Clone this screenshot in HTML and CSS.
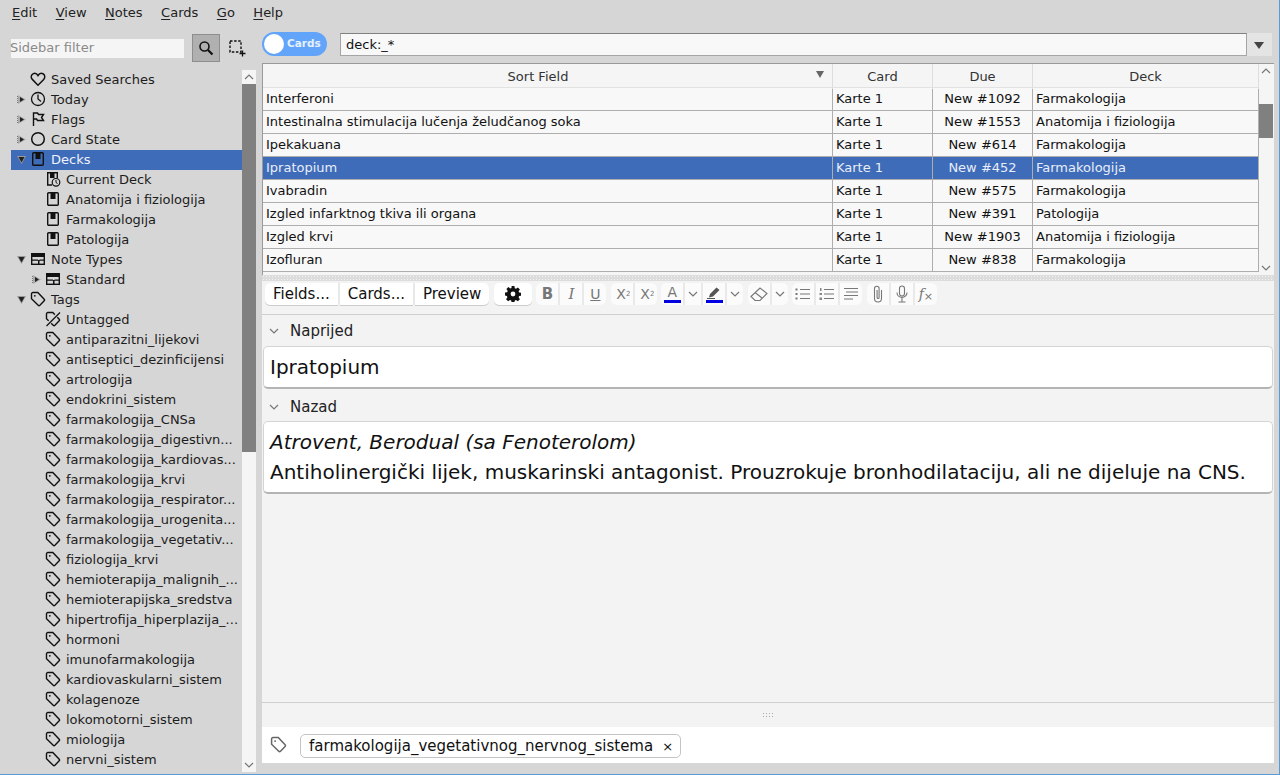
FILE: index.html
```html
<!DOCTYPE html>
<html lang="en">
<head>
    <meta charset="UTF-8">
    <meta name="viewport" content="width=device-width, initial-scale=1.0">
    <title>Browse</title>
    <link rel="stylesheet" href="styles.css">
</head>
<body>
    <svg class="sprite" width="0" height="0">
        <symbol id="open" viewBox="0 0 9 9"><path d="M0 1h9L4.500 9z" fill="#999"/><path d="M1.500 2h6L4.500 7.500z" fill="#222"/></symbol>
        <symbol id="closed" viewBox="0 0 9 9"><path d="M1 0l8 4.500L1 9z" fill="#aaa"/><path d="M3 2l4 2.500L3 7z" fill="#222"/><path d="M0 1h1v1H0zM0 3h1v1H0zM0 5h1v1H0zM0 7h1v1H0z" fill="#777"/></symbol>
        <symbol id="heart" viewBox="0 0 16 16"><path d="M8 14.200L2.300 8.400C.6 6.600 1 3.800 3 2.800c1.900-.9 3.800-.2 5 1.700 1.200-1.900 3.100-2.600 5-1.700 2 1 2.400 3.800.7 5.600z" fill="none" stroke="#111" stroke-width="1.500"/></symbol>
        <symbol id="clock" viewBox="0 0 16 16"><circle cx="8" cy="8" r="6.500" fill="none" stroke="#111" stroke-width="1.300"/><path d="M8 3.500V8l3 2.500" fill="none" stroke="#111" stroke-width="1.300"/></symbol>
        <symbol id="flag" viewBox="0 0 16 16"><path d="M3.500 15V2h4l1 1.500h5l-2 3 2 3h-6l-1-1.500H3.500" fill="none" stroke="#111" stroke-width="1.400"/></symbol>
        <symbol id="circle" viewBox="0 0 16 16"><circle cx="8" cy="8" r="6.300" fill="none" stroke="#111" stroke-width="1.500"/></symbol>
        <symbol id="deck" viewBox="0 0 16 16"><rect x="2.700" y="1.700" width="10.600" height="12.600" rx="1" fill="none" stroke="#111" stroke-width="1.400"/><path d="M5.500 2h5v6h-5z" fill="#111"/></symbol>
        <symbol id="current" viewBox="0 0 16 16"><path d="M7 14H2.700V1.700h9.600V7" fill="none" stroke="#111" stroke-width="1.400"/><path d="M5 2h4.500v5H5z" fill="#111"/><circle cx="11" cy="11.300" r="3.800" fill="#d6d6d6" stroke="#111" stroke-width="1.200"/><path d="M11 9v2.500l1.500 1" fill="none" stroke="#111"/></symbol>
        <symbol id="notetype" viewBox="0 0 16 16"><rect x="1.700" y="2.700" width="12.600" height="10.600" fill="none" stroke="#111" stroke-width="1.400"/><path d="M2 3h12v3H2zM2 8.500h6v1.300H2zM9.500 8.500H14v1.300H9.500zM8 9v4h1.500V9z" fill="#111"/></symbol>
        <symbol id="tag" viewBox="0 0 16 16"><path d="M1.500 2.800c0-.7.600-1.300 1.300-1.300h5l6.400 6.700c.4.500.4 1.200 0 1.600l-4.300 4.500c-.5.500-1.200.5-1.700 0L1.500 7.800z" fill="none" stroke="currentColor" stroke-width="1.400"/><circle cx="4.800" cy="4.800" r=".9" fill="currentColor"/></symbol>
        <symbol id="untagged" viewBox="0 0 16 16"><path d="M1.500 2.800c0-.7.600-1.300 1.300-1.300h5l6.400 6.700c.4.500.4 1.200 0 1.600l-4.300 4.500c-.5.500-1.200.5-1.700 0L1.500 7.800z" fill="none" stroke="#111" stroke-width="1.400"/><path d="M15 1L1 15" stroke="#d6d6d6" stroke-width="3.500"/><path d="M15 1.500L1.500 15" stroke="#111" stroke-width="1.300"/></symbol>
        <symbol id="caret" viewBox="0 0 10 6"><path d="M1 1l4 4 4-4" fill="none" stroke="#777" stroke-width="1.200"/></symbol>
    </svg>

    <div class="menubar">
        <span><u>E</u>dit</span>
        <span><u>V</u>iew</span>
        <span><u>N</u>otes</span>
        <span><u>C</u>ards</span>
        <span><u>G</u>o</span>
        <span><u>H</u>elp</span>
    </div>

    <div class="main">
        <div class="sidebar">
            <div class="filter-row">
                <div class="filter-input">Sidebar filter</div>
                <button class="search-btn">
                    <svg width="16" height="16" viewBox="0 0 16 16"><circle cx="6.500" cy="6.500" r="4.500" fill="none" stroke="#111" stroke-width="1.600"/><path d="M10 10l4.500 4.500" stroke="#111" stroke-width="2.200"/></svg>
                </button>
                <svg class="select-ico" width="17" height="17" viewBox="0 0 17 17"><path d="M1 1h11v11H1z" fill="none" stroke="#111" stroke-width="1.400" stroke-dasharray="2.500 1.600"/><path d="M13.500 10.500v6M10.500 13.500h6" stroke="#111" stroke-width="1.300"/></svg>
            </div>
            <div class="tree-wrap">
                <div class="tree">
                    <div class="row"><span class="arrow"></span><svg class="ico"><use href="#heart"/></svg>Saved Searches</div>
                    <div class="row"><span class="arrow"><svg><use href="#closed"/></svg></span><svg class="ico"><use href="#clock"/></svg>Today</div>
                    <div class="row"><span class="arrow"><svg><use href="#closed"/></svg></span><svg class="ico"><use href="#flag"/></svg>Flags</div>
                    <div class="row"><span class="arrow"><svg><use href="#closed"/></svg></span><svg class="ico"><use href="#circle"/></svg>Card State</div>
                    <div class="row selected"><span class="arrow"><svg><use href="#open"/></svg></span><svg class="ico"><use href="#deck"/></svg>Decks</div>
                    <div class="row child"><span class="arrow"></span><svg class="ico"><use href="#current"/></svg>Current Deck</div>
                    <div class="row child"><span class="arrow"></span><svg class="ico"><use href="#deck"/></svg>Anatomija i fiziologija</div>
                    <div class="row child"><span class="arrow"></span><svg class="ico"><use href="#deck"/></svg>Farmakologija</div>
                    <div class="row child"><span class="arrow"></span><svg class="ico"><use href="#deck"/></svg>Patologija</div>
                    <div class="row"><span class="arrow"><svg><use href="#open"/></svg></span><svg class="ico"><use href="#notetype"/></svg>Note Types</div>
                    <div class="row child"><span class="arrow"><svg><use href="#closed"/></svg></span><svg class="ico"><use href="#notetype"/></svg>Standard</div>
                    <div class="row"><span class="arrow"><svg><use href="#open"/></svg></span><svg class="ico"><use href="#tag"/></svg>Tags</div>
                    <div class="row child"><span class="arrow"></span><svg class="ico"><use href="#untagged"/></svg>Untagged</div>
                    <div class="row child"><span class="arrow"></span><svg class="ico"><use href="#tag"/></svg>antiparazitni_lijekovi</div>
                    <div class="row child"><span class="arrow"></span><svg class="ico"><use href="#tag"/></svg>antiseptici_dezinficijensi</div>
                    <div class="row child"><span class="arrow"></span><svg class="ico"><use href="#tag"/></svg>artrologija</div>
                    <div class="row child"><span class="arrow"></span><svg class="ico"><use href="#tag"/></svg>endokrini_sistem</div>
                    <div class="row child"><span class="arrow"></span><svg class="ico"><use href="#tag"/></svg>farmakologija_CNSa</div>
                    <div class="row child"><span class="arrow"></span><svg class="ico"><use href="#tag"/></svg>farmakologija_digestivn...</div>
                    <div class="row child"><span class="arrow"></span><svg class="ico"><use href="#tag"/></svg>farmakologija_kardiovas...</div>
                    <div class="row child"><span class="arrow"></span><svg class="ico"><use href="#tag"/></svg>farmakologija_krvi</div>
                    <div class="row child"><span class="arrow"></span><svg class="ico"><use href="#tag"/></svg>farmakologija_respirator...</div>
                    <div class="row child"><span class="arrow"></span><svg class="ico"><use href="#tag"/></svg>farmakologija_urogenita...</div>
                    <div class="row child"><span class="arrow"></span><svg class="ico"><use href="#tag"/></svg>farmakologija_vegetativ...</div>
                    <div class="row child"><span class="arrow"></span><svg class="ico"><use href="#tag"/></svg>fiziologija_krvi</div>
                    <div class="row child"><span class="arrow"></span><svg class="ico"><use href="#tag"/></svg>hemioterapija_malignih_...</div>
                    <div class="row child"><span class="arrow"></span><svg class="ico"><use href="#tag"/></svg>hemioterapijska_sredstva</div>
                    <div class="row child"><span class="arrow"></span><svg class="ico"><use href="#tag"/></svg>hipertrofija_hiperplazija_...</div>
                    <div class="row child"><span class="arrow"></span><svg class="ico"><use href="#tag"/></svg>hormoni</div>
                    <div class="row child"><span class="arrow"></span><svg class="ico"><use href="#tag"/></svg>imunofarmakologija</div>
                    <div class="row child"><span class="arrow"></span><svg class="ico"><use href="#tag"/></svg>kardiovaskularni_sistem</div>
                    <div class="row child"><span class="arrow"></span><svg class="ico"><use href="#tag"/></svg>kolagenoze</div>
                    <div class="row child"><span class="arrow"></span><svg class="ico"><use href="#tag"/></svg>lokomotorni_sistem</div>
                    <div class="row child"><span class="arrow"></span><svg class="ico"><use href="#tag"/></svg>miologija</div>
                    <div class="row child"><span class="arrow"></span><svg class="ico"><use href="#tag"/></svg>nervni_sistem</div>
                </div>
                <div class="scrollbar side-scroll">
                    <svg class="sb-btn"><use href="#caret" transform="rotate(180 7 7)" x="2" y="4" width="10" height="6"/></svg>
                    <div class="track"><div class="thumb"></div></div>
                    <svg class="sb-btn"><use href="#caret" x="2" y="4" width="10" height="6"/></svg>
                </div>
            </div>
        </div>

        <div class="content">
            <div class="search-row">
                <div class="toggle"><span class="knob"></span><span class="toggle-label">Cards</span></div>
                <div class="search-box">
                    <div class="search-text">deck:_*</div>
                    <div class="search-drop"></div>
                </div>
            </div>

            <div class="table-wrap">
                <div class="table">
                    <div class="thead">
                        <div class="th sorted">Sort Field<span class="sort-mark"></span></div>
                        <div class="th">Card</div>
                        <div class="th">Due</div>
                        <div class="th">Deck</div>
                    </div>
                    <div class="tr"><div>Interferoni</div><div>Karte 1</div><div class="due">New #1092</div><div>Farmakologija</div></div>
                    <div class="tr"><div>Intestinalna stimulacija lučenja želudčanog soka</div><div>Karte 1</div><div class="due">New #1553</div><div>Anatomija i fiziologija</div></div>
                    <div class="tr"><div>Ipekakuana</div><div>Karte 1</div><div class="due">New #614</div><div>Farmakologija</div></div>
                    <div class="tr active"><div>Ipratopium</div><div>Karte 1</div><div class="due">New #452</div><div>Farmakologija</div></div>
                    <div class="tr"><div>Ivabradin</div><div>Karte 1</div><div class="due">New #575</div><div>Farmakologija</div></div>
                    <div class="tr"><div>Izgled infarktnog tkiva ili organa</div><div>Karte 1</div><div class="due">New #391</div><div>Patologija</div></div>
                    <div class="tr"><div>Izgled krvi</div><div>Karte 1</div><div class="due">New #1903</div><div>Anatomija i fiziologija</div></div>
                    <div class="tr"><div>Izofluran</div><div>Karte 1</div><div class="due">New #838</div><div>Farmakologija</div></div>
                </div>
                <div class="scrollbar table-scroll">
                    <svg class="sb-btn"><use href="#caret" transform="rotate(180 7 7)" x="2" y="4" width="10" height="6"/></svg>
                    <div class="track"><div class="thumb"></div></div>
                    <svg class="sb-btn"><use href="#caret" x="2" y="4" width="10" height="6"/></svg>
                </div>
            </div>

            <div class="splitter"></div>

            <div class="editor">
                <div class="toolbar">
                    <div class="btn-group">
                        <button class="text-btn">Fields...</button>
                        <button class="text-btn">Cards...</button>
                        <button class="text-btn">Preview</button>
                    </div>
                    <button class="gear-btn">
                        <svg width="16" height="16" viewBox="0 0 16 16"><path d="M6.600 0h2.800l.4 2.200 1.200.5 1.900-1.300 2 2-1.300 1.900.5 1.200 2.200.4v2.800l-2.200.4-.5 1.200 1.300 1.900-2 2-1.900-1.300-1.200.5-.4 2.200H6.600l-.4-2.200-1.200-.5-1.900 1.300-2-2 1.300-1.900-.5-1.200L0 9.400V6.600l2.200-.4.500-1.200L1.400 3.100l2-2 1.900 1.300 1.200-.5z" fill="#111"/><circle cx="8" cy="8" r="2.400" fill="#fff"/></svg>
                    </button>
                    <div class="icon-group">
                        <span class="tb bold">B</span><span class="tb ital">I</span><span class="tb under">U</span>
                    </div>
                    <div class="icon-group">
                        <span class="tb script">X<sup>2</sup></span><span class="tb script">X<sub>2</sub></span>
                    </div>
                    <div class="icon-group">
                        <span class="tb color"><i>A</i><b></b></span><span class="tb narrow"><svg width="10" height="6"><use href="#caret"/></svg></span><span class="tb color">
                            <svg width="16" height="13" viewBox="0 0 16 13"><path d="M3 11.500l1-3.500 6.500-6.500 3 2.500L7 10.500z" fill="#555"/><path d="M1 12.500h8" stroke="#555"/></svg><b></b>
                        </span><span class="tb narrow"><svg width="10" height="6"><use href="#caret"/></svg></span>
                    </div>
                    <div class="icon-group">
                        <span class="tb">
                            <svg width="18" height="18" viewBox="0 0 18 18"><path d="M1 11.500l9-8.500 7 5.500-7 7H5zM5 7.500l7 5.500" fill="none" stroke="#777" stroke-width="1.100"/></svg>
                        </span><span class="tb narrow"><svg width="10" height="6"><use href="#caret"/></svg></span>
                    </div>
                    <div class="icon-group">
                        <span class="tb">
                            <svg width="16" height="14" viewBox="0 0 16 14"><path d="M5 2.500h10M5 7h10M5 11.500h10" stroke="#777"/><path d="M.5 1.500h2v2h-2zM.5 6h2v2h-2zM.5 10.500h2v2h-2z" fill="#777"/></svg>
                        </span><span class="tb">
                            <svg width="16" height="14" viewBox="0 0 16 14"><path d="M5 2.500h10M5 7h10M5 11.500h10" stroke="#777"/><path d="M1 1h1.500v3H1zM.5 6H3v2H.5zM.5 10.500H3V13H.5z" fill="#888"/></svg>
                        </span><span class="tb">
                            <svg width="16" height="14" viewBox="0 0 16 14"><path d="M1 1.500h14M3 5h12M1 8.500h14M1 12h9" stroke="#777"/></svg>
                        </span>
                    </div>
                    <div class="icon-group">
                        <span class="tb">
                            <svg width="12" height="18" viewBox="0 0 12 18"><path d="M9.500 5v8.500a3.500 3.500 0 0 1-7 0V3.500a2.300 2.300 0 0 1 4.600 0v9a1 1 0 0 1-2 0V5" fill="none" stroke="#777" stroke-width="1.100"/></svg>
                        </span><span class="tb">
                            <svg width="14" height="18" viewBox="0 0 14 18"><rect x="4.500" y="1" width="5" height="10" rx="2.500" fill="none" stroke="#777" stroke-width="1.100"/><path d="M2 7.500c0 6.500 10 6.500 10 0M7 13v4M3.500 17h7" fill="none" stroke="#777" stroke-width="1.100"/></svg>
                        </span><span class="tb fx"><i>f</i><small>×</small></span>
                    </div>
                </div>

                <div class="fields">
                    <div class="field-label"><svg width="10" height="6"><use href="#caret"/></svg>Naprijed</div>
                    <div class="field-box">Ipratopium</div>
                    <div class="field-label"><svg width="10" height="6"><use href="#caret"/></svg>Nazad</div>
                    <div class="field-box"><em>Atrovent, Berodual (sa Fenoterolom)</em><br>Antiholinergički lijek, muskarinski antagonist. Prouzrokuje bronhodilataciju, ali ne dijeluje na CNS.</div>
                </div>

                <div class="grip-row"><span class="grip"></span></div>

                <div class="tag-bar">
                    <svg class="tag-ico" width="17" height="17"><use href="#tag"/></svg>
                    <div class="tag-pill">farmakologija_vegetativnog_nervnog_sistema<span class="tag-x">×</span></div>
                </div>
            </div>
        </div>
    </div>
    <div class="bottom-gap"></div>
</body>
</html>
```

FILE: styles.css
```css
* {
    box-sizing: border-box;
}

body {
    margin: 0;
    width: 1280px;
    height: 775px;
    overflow: hidden;
    background: #d6d6d6;
    color: #111;
    font-family: "DejaVu Sans", sans-serif;
    font-size: 13px;
    display: flex;
    flex-direction: column;
    border-right: 1px solid #5b9bd5;
    border-bottom: 1px solid #5b9bd5;
}

.sprite {
    position: absolute;
}

u {
    text-underline-offset: 2px;
}

/* menu */
.menubar {
    height: 24px;
    flex: none;
    display: flex;
    align-items: center;
    gap: 18.500px;
    padding-left: 12px;
    color: #222;
}

/* left side */
.main {
    flex: 1;
    display: flex;
    min-height: 0;
}

.sidebar {
    width: 262px;
    flex: none;
    padding-top: 10px;
}

.filter-row {
    display: flex;
    align-items: center;
    height: 28px;
    padding-left: 11px;
}

.filter-input {
    width: 173px;
    height: 19px;
    background: #f5f5f5;
    color: #8a8a8a;
    line-height: 17px;
    text-indent: -1px;
}

.search-btn {
    width: 28px;
    height: 28px;
    margin-left: 8px;
    padding: 0;
    display: flex;
    align-items: center;
    justify-content: center;
    background: #b0b0b0;
    border: 1px solid #8e8e8e;
}

.select-ico {
    margin-left: 9px;
}

.tree-wrap {
    display: flex;
    margin: 8px 0 0 11px;
    height: 702px;
    width: 245px;
}

.tree {
    width: 231px;
    flex: none;
}

.row {
    height: 20px;
    padding-bottom: 2px;
    display: flex;
    align-items: center;
    white-space: nowrap;
    color: #1c1c1c;
}

.row.child {
    padding-left: 15px;
}

.row.selected {
    background: #3f6cb8;
    color: #eef2fa;
}

.arrow {
    width: 19px;
    height: 9px;
    padding-left: 6px;
    flex: none;
}

.arrow svg {
    width: 9px;
    height: 9px;
    display: block;
}

.ico {
    width: 16px;
    height: 16px;
    margin-right: 5px;
    flex: none;
    color: #111;
}

/* scrollbars */
.scrollbar {
    width: 14px;
    flex: none;
    background: #f5f5f5;
    display: flex;
    flex-direction: column;
}

.sb-btn {
    width: 14px;
    height: 14px;
    flex: none;
}

.track {
    flex: 1;
}

.thumb {
    background: #808080;
}

.side-scroll .thumb {
    height: 368px;
}

.table-scroll .track {
    padding-top: 26px;
}

.table-scroll .thumb {
    height: 34px;
}

/* right side */
.content {
    flex: 1;
    padding-top: 8px;
    display: flex;
    flex-direction: column;
    min-width: 0;
    padding-right: 5px;
}

.search-row {
    display: flex;
    height: 24px;
    align-items: center;
}

.toggle {
    width: 65px;
    height: 24px;
    border-radius: 12px;
    background: #62a4fa;
    color: #e6f0fe;
    font-size: 10.500px;
    font-weight: bold;
    display: flex;
    align-items: center;
    padding-left: 2px;
    gap: 3px;
}

.toggle-label {
    margin-bottom: 2px;
}

.knob {
    width: 20px;
    height: 20px;
    border-radius: 50%;
    background: #fff;
}

.search-box {
    margin-left: 13px;
    flex: 1;
    margin-right: 2px;
    display: flex;
    height: 23px;
}

.search-text {
    flex: 1;
    background: #f8f8f8;
    border: 1px solid #a5a5a5;
    border-top-color: #808080;
    padding-left: 5px;
    line-height: 21px;
}

.search-drop {
    width: 25px;
    background: #e4e4e4;
    position: relative;
}

.search-drop::after {
    content: "";
    position: absolute;
    left: 7px;
    top: 9px;
    border: 5px solid transparent;
    border-top: 7px solid #444;
    border-bottom: 0;
}

.table-wrap {
    display: flex;
    margin-top: 7px;
    height: 212px;
    flex: none;
    background: #f5f5f5;
    border-top: 1px solid #9a9a9a;
    border-left: 1px solid #9a9a9a;
}

.table {
    width: 996px;
    flex: none;
    overflow: hidden;
}

.thead, .tr {
    display: grid;
    grid-template-columns: 570px 100px 100px 226px;
}

.thead {
    height: 24px;
    color: #333;
    border-bottom: 1px solid #e2e2e2;
}

.th {
    text-align: center;
    line-height: 25px;
    border-right: 1px solid #ddd;
    position: relative;
}

.th.sorted {
    padding-right: 19px;
}

.sort-mark {
    position: absolute;
    right: 8px;
    top: 7px;
    border: 4px solid transparent;
    border-top: 7px solid #666;
    border-bottom: 0;
}

.tr {
    height: 23px;
    border-bottom: 1px solid #aeaeae;
    border-right: 1px solid #aeaeae;
    background: #f8f8f8;
    line-height: 22px;
}

.tr div {
    padding-left: 3px;
    white-space: nowrap;
    overflow: hidden;
    border-right: 1px solid #aeaeae;
}

.tr div:last-child {
    border-right: 0;
}

.tr .due {
    padding-left: 0;
    text-align: center;
}

.tr.active {
    background: #3f6cb8;
    color: #e8eef8;
}

.splitter {
    height: 6px;
    flex: none;
    background-color: #dcdcdc;
    background-image: radial-gradient(#f2f2f2 0.8px, transparent 0.9px);
    background-size: 3px 3px;
}

/* editor */
.editor {
    flex: 1;
    background: #f3f3f3;
    display: flex;
    flex-direction: column;
    min-height: 0;
}

.toolbar {
    height: 34px;
    flex: none;
    padding: 2px 0 0 3px;
    display: flex;
    align-items: flex-start;
    gap: 4.500px;
    border-bottom: 1px solid #cfcfcf;
}

.btn-group {
    display: flex;
    gap: 2px;
    background: #e8e8e8;
    border-radius: 5px;
    height: 22px;
}

.text-btn {
    height: 22px;
    border: 0;
    background: #fff;
    font: 15px "DejaVu Sans", sans-serif;
    color: #111;
    padding: 0 8px;
    box-shadow: 0 1px 0 #ccc;
}

.text-btn:first-child {
    border-radius: 5px 0 0 5px;
}

.text-btn:last-child {
    border-radius: 0 5px 5px 0;
}

.gear-btn {
    width: 38px;
    height: 22px;
    padding: 0;
    border: 0;
    background: #fff;
    border-radius: 5px;
    box-shadow: 0 1px 0 #ccc;
    display: flex;
    align-items: center;
    justify-content: center;
}

.icon-group {
    display: flex;
    gap: 2px;
    border-radius: 5px;
    overflow: hidden;
    height: 22px;
    background: #e9e9e9;
}

.tb {
    width: 22px;
    height: 22px;
    background: #fbfbfb;
    display: flex;
    flex-direction: column;
    align-items: center;
    justify-content: center;
    color: #777;
    font-style: normal;
}

.tb.narrow {
    width: 16px;
}

.bold {
    font-weight: bold;
    font-size: 15px;
}

.ital {
    font-family: "DejaVu Serif", serif;
    font-style: italic;
    font-size: 15px;
}

.under {
    text-decoration: underline;
    font-size: 14px;
}

.script {
    flex-direction: row;
    font-size: 14px;
    padding-left: 3px;
}

.script sup, .script sub {
    font-size: 7px;
    line-height: 1;
}

.color i {
    font-style: normal;
    font-size: 14px;
    line-height: 14px;
}

.color b {
    display: block;
    width: 17px;
    height: 3px;
    margin-top: 1px;
    background: #0000e0;
}

.fx {
    flex-direction: row;
}

.fx i {
    font-family: "DejaVu Serif", serif;
    font-size: 14px;
}

.fx small {
    font-size: 11px;
    margin-top: 4px;
}

.fields {
    flex: 1;
    padding: 4px 1px 0 1px;
    border-bottom: 1px solid #cfcfcf;
}

.field-label {
    height: 24px;
    margin-bottom: 3px;
    display: flex;
    align-items: center;
    gap: 11px;
    padding-left: 6px;
    font-size: 15px;
    color: #222;
}

.field-box {
    background: #fff;
    border-radius: 5px;
    border: 1px solid #d4d4d4;
    border-bottom: 2px solid #b4b4b4;
    padding: 5px 6px;
    font-size: 20px;
    line-height: 30px;
    margin-bottom: 6px;
    color: #111;
}

.field-box + .field-label {
    margin-bottom: 2px;
}

.grip-row {
    height: 24px;
    flex: none;
    display: flex;
    justify-content: center;
    align-items: center;
    padding-left: 1px;
}

.grip {
    width: 13px;
    height: 6px;
    background-image: radial-gradient(#aaa 0.9px, transparent 1px);
    background-size: 3px 3px;
}

.tag-bar {
    height: 36px;
    flex: none;
    background: #fff;
    display: flex;
    align-items: center;
    padding-left: 8px;
}

.tag-ico {
    color: #666;
    margin-right: 13px;
    margin-top: -2px;
}

.tag-pill {
    height: 24px;
    margin-top: 2px;
    border: 1px solid #c4c4c4;
    border-radius: 5px;
    font-size: 15px;
    line-height: 22px;
    padding-left: 8px;
    color: #111;
    background: #fff;
}

.tag-x {
    margin: 0 7px 0 9px;
    font-size: 13px;
}

.bottom-gap {
    height: 11px;
    flex: none;
}
```
